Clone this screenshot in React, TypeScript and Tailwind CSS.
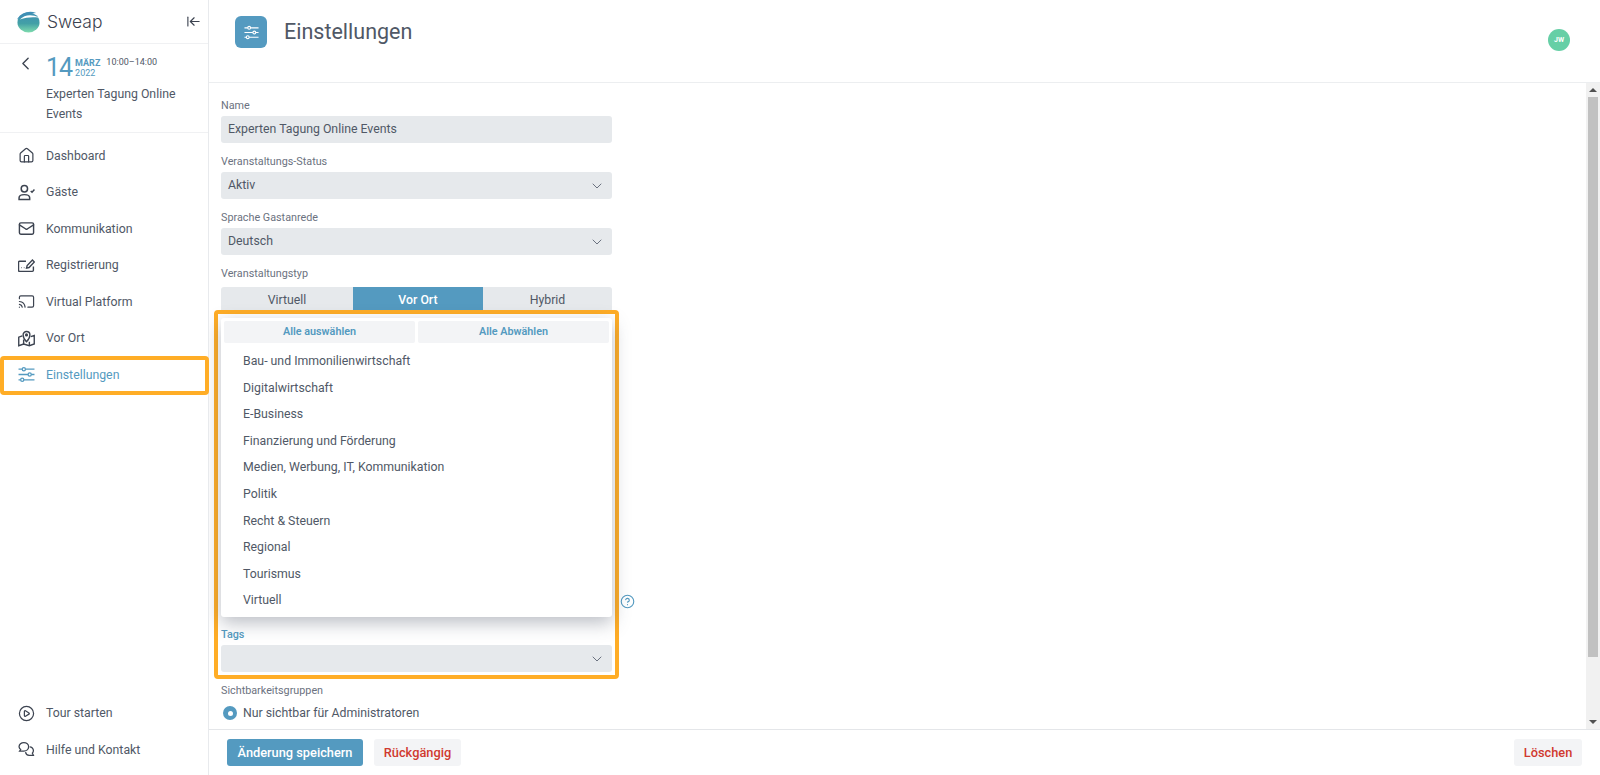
import { ChevronDown, ChevronLeft, CirclePlay, CircleHelp, Cast, House, Mail, ArrowLeftToLine } from 'lucide-react'

function Sliders({ className = '' }: { className?: string }) {
  return (
    <svg viewBox="0 0 16 16" className={className} fill="none" stroke="currentColor" strokeWidth="1.2">
      <path d="M0.5 3H4M7 3H15.5M0.5 8H9.5M12.5 8H15.5M0.5 13H2.5M5.5 13H15.5" />
      <circle cx="5.5" cy="3" r="1.5" />
      <circle cx="11" cy="8" r="1.5" />
      <circle cx="4" cy="13" r="1.5" />
    </svg>
  )
}

function Guests() {
  return (
    <svg viewBox="0 0 16 16" className="h-[17px] w-[17px]" fill="none" stroke="currentColor" strokeWidth="1.4">
      <circle cx="6" cy="4.5" r="3" />
      <path d="M1 14.5v-1.5c0-1.6 1.6-3 5-3s5 1.4 5 3v1.5z" />
      <path d="M12 6.5l1.2 1.2 2.3-2.6" />
    </svg>
  )
}

function Register() {
  return (
    <svg viewBox="0 0 16 16" className="h-[17px] w-[17px]" fill="none" stroke="currentColor" strokeWidth="1.3">
      <path d="M7.5 4H1.5a1 1 0 0 0-1 1v7.5a1 1 0 0 0 1 1h12a1 1 0 0 0 1-1V9" />
      <path d="M3 10h.5M5.5 10H6" />
      <path d="M8 10.500l.6-2.400 5-5.200 1.800 1.800-5 5.200z" />
    </svg>
  )
}

function VenueMap() {
  return (
    <svg viewBox="0 0 16 16" className="h-[17px] w-[17px]" fill="none" stroke="currentColor" strokeWidth="1.3">
      <path d="M4 5.500L.7 6.800v8l4.600-1.600 5.400 1.600 4.600-1.600v-8L12 6.200" />
      <path d="M5.300 9v4.200M10.700 11v3.800" />
      <path d="M8 11S4.800 7.600 4.800 4.600a3.200 3.200 0 0 1 6.400 0C11.200 7.600 8 11 8 11z" />
      <circle cx="8" cy="4.600" r="0.800" />
    </svg>
  )
}

function Contact() {
  return (
    <svg viewBox="0 0 16 16" className="h-[17px] w-[17px]" fill="none" stroke="currentColor" strokeWidth="1.2">
      <path d="M5.500 1.500a4.500 4 0 0 1 4.500 4 4.500 4 0 0 1-4.500 4H1.500l1-1.500a4 4 0 0 1-1.500-2.500 4.500 4 0 0 1 4.500-4z" />
      <path d="M11 5.500a3.500 3.500 0 0 1 3.500 3.500c0 1-.4 1.800-1 2.400l1 2.100h-4a3.500 3.500 0 0 1-3.400-3" />
    </svg>
  )
}

function Logo() {
  return (
    <svg viewBox="0 0 24 24" className="h-[23px] w-[23px]">
      <defs>
        <linearGradient id="sweapLogo" x1="0" y1="0" x2="0" y2="1">
          <stop offset="0" stopColor="#3f8fb5" />
          <stop offset="0.55" stopColor="#43a0a6" />
          <stop offset="1" stopColor="#7fdcae" />
        </linearGradient>
      </defs>
      <ellipse cx="12" cy="13" rx="11.500" ry="10.500" fill="url(#sweapLogo)" />
      <path d="M0 10C4 3 12 0 20 3 13 3 7 5.500 0 10z" fill="#3f8fb5" />
      <path d="M3 10C8 5 15 4 23 8 16 7 10 7.500 3 10z" fill="#fff" />
    </svg>
  )
}

const navItems = [
  { label: 'Dashboard', icon: <House className="h-[17px] w-[17px]" strokeWidth={1.7} /> },
  { label: 'Gäste', icon: <Guests /> },
  { label: 'Kommunikation', icon: <Mail className="h-[17px] w-[17px]" strokeWidth={2} /> },
  { label: 'Registrierung', icon: <Register /> },
  { label: 'Virtual Platform', icon: <Cast className="h-[17px] w-[17px]" strokeWidth={1.7} /> },
  { label: 'Vor Ort', icon: <VenueMap /> },
]

const categories = [
  'Bau- und Immonilienwirtschaft',
  'Digitalwirtschaft',
  'E-Business',
  'Finanzierung und Förderung',
  'Medien, Werbung, IT, Kommunikation',
  'Politik',
  'Recht & Steuern',
  'Regional',
  'Tourismus',
  'Virtuell',
]

function NavItem({ icon, label, active = false }: { icon: React.ReactNode; label: string; active?: boolean }) {
  return (
    <div className={`flex h-[36.500px] items-center pl-[17px] text-[12.300px] ${active ? 'text-[#549ac0]' : 'text-[#505866]'}`}>
      <span className={`mr-[11px] flex w-[18px] justify-center ${active ? '' : 'text-[#3c4350]'}`}>{icon}</span>
      {label}
    </div>
  )
}

function Label({ children, blue = false, gap = 'mb-[4px]' }: { children: React.ReactNode; blue?: boolean; gap?: string }) {
  return <div className={`h-[13px] text-[10.800px] leading-[13px] ${gap} ${blue ? 'font-medium text-[#549ac0]' : 'text-[#6b7280]'}`}>{children}</div>
}

function Field({ value, select = false }: { value: string; select?: boolean }) {
  return (
    <div className="flex h-[27px] items-center justify-between rounded-[3px] bg-[#e6e9ec] px-[7px] text-[12.300px] text-[#505866]">
      <span>{value}</span>
      {select && <ChevronDown className="h-[16px] w-[16px] text-[#6b7280]" strokeWidth={1.5} />}
    </div>
  )
}

function FooterButton({ children, className }: { children: React.ReactNode; className: string }) {
  return <button className={`flex h-[27px] items-center justify-center rounded-[3px] text-[12.800px] font-medium ${className}`}>{children}</button>
}

export default function App() {
  return (
    <div className='relative flex h-[775px] w-[1600px] overflow-hidden bg-white font-["Roboto","Noto_Sans",sans-serif]'>
      <aside className="flex w-[209px] shrink-0 flex-col border-r border-[#e8eaed]">
        <div className="flex h-[44px] shrink-0 items-center border-b border-[#f0f1f3] pl-[17px] pr-[7px]">
          <Logo />
          <span className='ml-[7px] mt-[2px] font-["Inter",sans-serif] text-[17.500px] font-light text-[#3c4350]'>Sweap</span>
          <ArrowLeftToLine className="ml-auto h-[15px] w-[15px] text-[#3c4350]" strokeWidth={1.8} />
        </div>
        <div className="flex h-[89px] shrink-0 border-b border-[#f0f1f3] pl-[15px]">
          <ChevronLeft className="mt-[9px] h-[21px] w-[21px] text-[#3c4350]" strokeWidth={1.6} />
          <div className="ml-[10px] pt-[11px]">
            <div className="flex h-[25px] items-center">
              <span className="text-[25px] leading-none tracking-[-1px] text-[#549ac0]">14</span>
              <div className="ml-[3px] text-[9px] leading-[10px] text-[#549ac0]">
                <div className="font-bold">MÄRZ</div>
                <div>2022</div>
              </div>
              <span className="mb-[9px] ml-[6px] text-[9px] text-[#505866]">10:00–14:00</span>
            </div>
            <div className="mt-[5px] w-[150px] text-[12.300px] leading-[19.500px] text-[#505866]">Experten Tagung Online Events</div>
          </div>
        </div>
        <nav className="pt-[4.500px]">
          {navItems.map((item) => (
            <NavItem key={item.label} icon={item.icon} label={item.label} />
          ))}
          <NavItem icon={<Sliders className="h-[17px] w-[17px]" />} label="Einstellungen" active />
        </nav>
        <div className="mt-auto pb-[7px]">
          <NavItem icon={<CirclePlay className="h-[17px] w-[17px]" strokeWidth={1.7} />} label="Tour starten" />
          <NavItem icon={<Contact />} label="Hilfe und Kontakt" />
        </div>
      </aside>

      <main className="flex min-w-0 flex-1 flex-col">
        <header className="flex h-[83px] shrink-0 items-start border-b border-[#eceef0] pl-[26px] pr-[30px] pt-[16px]">
          <div className="flex h-[32px] w-[32px] items-center justify-center rounded-[6px] bg-[#549ac0] text-white">
            <Sliders className="h-[15px] w-[15px]" />
          </div>
          <h1 className="ml-[17px] text-[21.500px] font-normal leading-[32px] text-[#505866]">Einstellungen</h1>
          <div className="ml-auto mt-[13px] flex h-[22px] w-[22px] items-center justify-center rounded-full bg-[#66cfa6] text-[7px] font-bold text-white">JW</div>
        </header>

        <div className="flex min-h-0 flex-1">
          <div className="relative min-w-0 flex-1 overflow-hidden pl-[12px] pt-[16px]">
            <div className="w-[391px]">
              <Label>Name</Label>
              <Field value="Experten Tagung Online Events" />
              <div className="mt-[12px]">
                <Label>Veranstaltungs-Status</Label>
                <Field value="Aktiv" select />
              </div>
              <div className="mt-[12px]">
                <Label>Sprache Gastanrede</Label>
                <Field value="Deutsch" select />
              </div>
              <div className="mt-[12px]">
                <Label gap="mb-[7px]">Veranstaltungstyp</Label>
                <div className="flex h-[27px] overflow-hidden rounded-[3px] bg-[#e6e9ec] text-[12.300px] text-[#505866]">
                  <div className="flex w-[132px] items-center justify-center">Virtuell</div>
                  <div className="flex w-[130px] items-center justify-center bg-[#549ac0] font-medium text-white">Vor Ort</div>
                  <div className="flex flex-1 items-center justify-center">Hybrid</div>
                </div>
              </div>

              <div className="relative mt-[4px]">
                <div className="absolute left-0 top-0 z-10 w-[391px] rounded-[3px] bg-white px-[3px] pt-[3px] shadow-[0_6px_18px_rgba(60,70,90,0.35)]">
                  <div className="flex gap-[3px]">
                    <div className="flex h-[22px] flex-1 items-center justify-center rounded-[2px] bg-[#f3f4f6] text-[10.800px] font-semibold text-[#549ac0]">Alle auswählen</div>
                    <div className="flex h-[22px] flex-1 items-center justify-center rounded-[2px] bg-[#f3f4f6] text-[10.800px] font-semibold text-[#549ac0]">Alle Abwählen</div>
                  </div>
                  <ul className="pb-[3px] pt-[5px]">
                    {categories.map((c) => (
                      <li key={c} className="flex h-[26.600px] items-center pl-[19px] text-[12.300px] text-[#505866]">{c}</li>
                    ))}
                  </ul>
                </div>
              </div>
              <div className="relative pt-[310px]">
                <CircleHelp className="absolute left-[399px] top-[276px] h-[15px] w-[15px] text-[#549ac0]" strokeWidth={1.8} />
                <Label blue>Tags</Label>
                <Field value="" select />
              </div>
              <div className="mt-[12px]">
                <Label>Sichtbarkeitsgruppen</Label>
                <div className="mt-[7px] flex items-center text-[12.300px] text-[#505866]">
                  <span className="ml-[2px] mr-[6px] flex h-[14px] w-[14px] items-center justify-center rounded-full bg-[#549ac0]">
                    <span className="h-[5px] w-[5px] rounded-full bg-white" />
                  </span>
                  Nur sichtbar für Administratoren
                </div>
              </div>
            </div>
          </div>
          <div className="flex w-[14px] shrink-0 flex-col items-center bg-[#f1f1f1]">
            <div className="flex h-[14px] items-center justify-center">
              <span className="h-0 w-0 border-x-[4px] border-b-[4px] border-x-transparent border-b-[#505050]" />
            </div>
            <div className="h-[560px] w-[10px] bg-[#c1c1c1]" />
            <div className="mt-auto flex h-[14px] items-center justify-center">
              <span className="h-0 w-0 border-x-[4px] border-t-[4px] border-x-transparent border-t-[#505050]" />
            </div>
          </div>
        </div>

        <footer className="flex h-[46px] shrink-0 items-center border-t border-[#e4e6e9] pl-[18px] pr-[18px]">
          <FooterButton className="w-[136px] bg-[#549ac0] text-white">Änderung speichern</FooterButton>
          <FooterButton className="ml-[11px] w-[87px] bg-[#f3f4f6] text-[#d0392f]">Rückgängig</FooterButton>
          <FooterButton className="ml-auto w-[68px] bg-[#f3f4f6] text-[#d0392f]">Löschen</FooterButton>
        </footer>
      </main>

      {/* orange annotation frames drawn on top of the screenshot */}
      <div className="pointer-events-none absolute left-0 top-[356px] h-[39px] w-[209px] rounded-[4px] border-4 border-[#ffad26]" />
      <div className="pointer-events-none absolute left-[214px] top-[310px] h-[369px] w-[405px] rounded-[4px] border-4 border-[#ffad26]" />
    </div>
  )
}
